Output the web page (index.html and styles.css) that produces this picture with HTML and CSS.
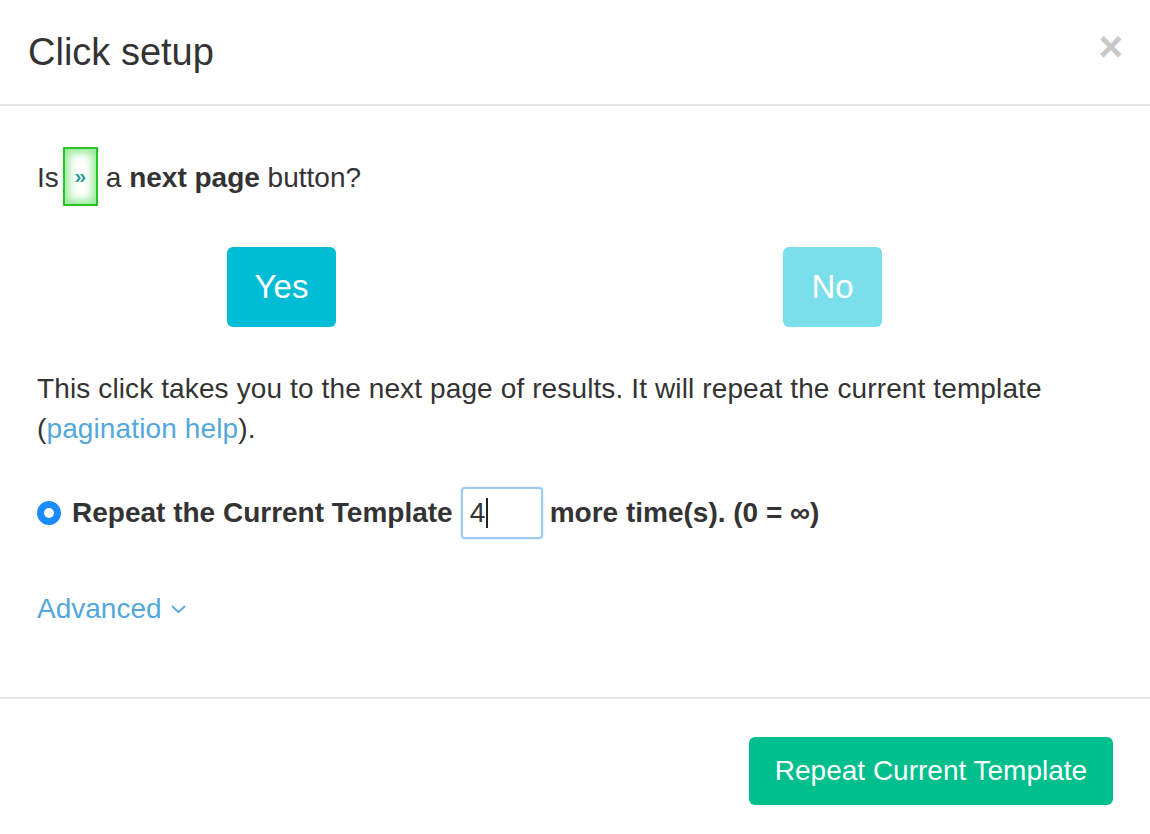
FILE: index.html
```html
<!DOCTYPE html>
<html lang="en">
<head>
<meta charset="utf-8">
<title>Click setup</title>
<link rel="stylesheet" href="styles.css">
</head>
<body>
<div class="modal">
  <div class="modal-header">
    <h4 class="modal-title">Click setup</h4>
    <button class="close" type="button" aria-label="Close">&times;</button>
  </div>
  <div class="modal-body">
    <div class="question">
      <span>Is</span>
      <span class="preview"><span class="preview-glyph">&raquo;</span></span>
      <span>a <b>next page</b> button?</span>
    </div>
    <div class="answers">
      <button class="btn btn-yes" type="button">Yes</button>
      <button class="btn btn-no" type="button">No</button>
    </div>
    <p class="explain">This click takes you to the next page of results. It will repeat the current template (<a class="link" href="#">pagination help</a>).</p>
    <div class="repeat-row">
      <span class="radio"></span>
      <b class="repeat-label">Repeat the Current Template</b>
      <div class="count-input" role="textbox">4<span class="caret"></span></div>
      <b class="repeat-tail">more time(s). (0 = &infin;)</b>
    </div>
    <a class="advanced link" href="#">Advanced
      <svg class="chevron" width="15" height="9" viewBox="0 0 15 9"><path d="M1.5 1.5 L7.5 7.2 L13.5 1.5" fill="none" stroke="#52a8dc" stroke-width="1.8" stroke-linecap="round" stroke-linejoin="round"/></svg>
    </a>
  </div>
  <div class="modal-footer">
    <button class="btn btn-repeat" type="button">Repeat Current Template</button>
  </div>
</div>
</body>
</html>
```
FILE: styles.css
```css
html, body {
  margin: 0;
  padding: 0;
  background: #ffffff;
}
body {
  font-family: "Liberation Sans", Arial, Helvetica, sans-serif;
  font-size: 28px;
  line-height: 40px;
  color: #333333;
}
.modal {
  width: 1150px;
  height: 834px;
  display: flex;
  flex-direction: column;
}
.modal-header {
  display: flex;
  justify-content: space-between;
  align-items: flex-start;
  padding: 27px 27px 27px 28px;
  border-bottom: 2px solid #e5e5e5;
}
.modal-title {
  margin: 0;
  font-size: 38px;
  line-height: 50px;
  font-weight: normal;
  color: #333333;
}
.close {
  border: 0;
  background: none;
  padding: 0;
  margin-top: -5px;
  font-family: "Liberation Sans", Arial, sans-serif;
  font-size: 42px;
  line-height: 50px;
  font-weight: bold;
  color: #c8c8c8;
}
.modal-body {
  padding: 41px 37px 0 37px;
  height: 593px;
  box-sizing: border-box;
  border-bottom: 2px solid #e5e5e5;
}
.question {
  display: flex;
  align-items: center;
  height: 59px;
  padding-top: 2px;
  box-sizing: border-box;
}
.question b {
  font-weight: bold;
}
.preview {
  display: inline-flex;
  align-items: center;
  justify-content: center;
  width: 35px;
  height: 59px;
  box-sizing: border-box;
  margin: -2px 8px 0 4px;
  border: 2px solid #27c427;
  background: #ffffff;
  box-shadow: inset 0 0 8px 4px rgba(60, 215, 60, 0.55);
}
.preview-glyph {
  font-size: 21px;
  line-height: 20px;
  font-weight: bold;
  color: #2a9d9a;
  margin-top: -2px;
}
.answers {
  display: flex;
  gap: 447px;
  padding-left: 190px;
  margin-top: 41px;
}
.btn {
  border: 0;
  border-radius: 6px;
  color: #ffffff;
  font-family: "Liberation Sans", Arial, sans-serif;
  cursor: pointer;
}
.btn-yes, .btn-no {
  height: 80px;
  font-size: 33px;
  padding: 0;
}
.btn-yes {
  width: 109px;
  background: #00bdd5;
}
.btn-no {
  width: 99px;
  background: #7adfea;
}
.explain {
  margin: 42px 0 0 0;
  letter-spacing: 0.12px;
}
.link {
  color: #52a8dc;
  text-decoration: none;
}
.repeat-row {
  display: flex;
  align-items: center;
  height: 52px;
  margin-top: 38px;
}
.radio {
  width: 24px;
  height: 24px;
  box-sizing: border-box;
  border-radius: 50%;
  border: 7.5px solid #1a8cff;
  background: #ffffff;
  margin-right: 11px;
}
.count-input {
  width: 82px;
  height: 52px;
  box-sizing: border-box;
  border: 2px solid #9ccbf2;
  border-radius: 4px;
  margin: 0 7px 0 8px;
  padding-left: 7px;
  display: flex;
  align-items: center;
  font-size: 28px;
  color: #333333;
  box-shadow: 0 0 2px rgba(102, 175, 233, 0.5);
}
.caret {
  display: inline-block;
  width: 2px;
  height: 30px;
  background: #222222;
  margin-left: 1px;
}
.advanced {
  display: inline-flex;
  align-items: center;
  margin-top: 50px;
}
.chevron {
  margin-left: 9px;
  margin-top: 1px;
}
.modal-footer {
  display: flex;
  justify-content: flex-end;
  padding: 38px 37px 0 0;
}
.btn-repeat {
  width: 364px;
  height: 68px;
  font-size: 28px;
  padding: 0;
  background: #00bf8c;
}
```
